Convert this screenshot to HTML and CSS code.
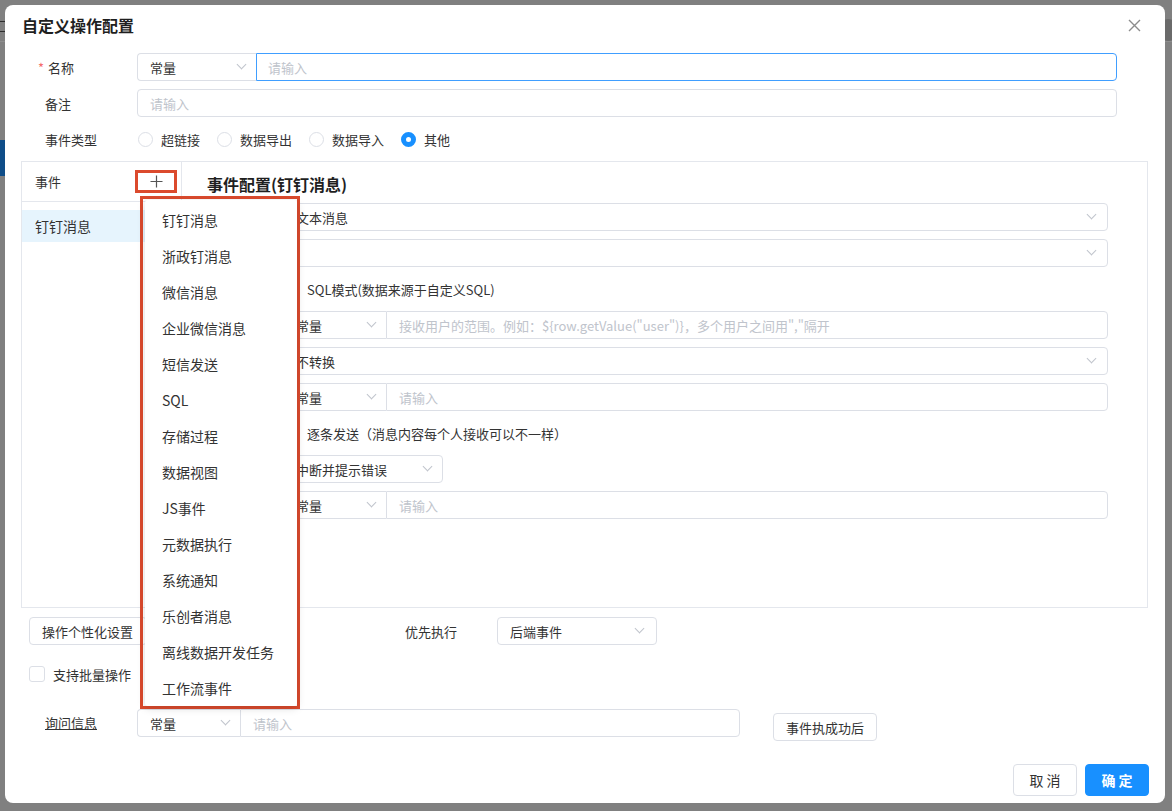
FILE: index.html
```html
<!DOCTYPE html>
<html lang="zh-CN">
<head>
  <meta charset="UTF-8" />
  <title>自定义操作配置</title>
  <link rel="stylesheet" href="styles.css">
</head>
<body>

<div class="page-behind">
  <div class="behind-top"><span class="behind-mark"></span></div>
  <div class="behind-nav"></div>
  <div class="behind-badge"></div>
</div>

<div class="dialog">
  <div class="dialog-head">
    <span class="dialog-title">自定义操作配置</span>
    <span class="dialog-close">
      <svg width="13" height="13" viewBox="0 0 13 13"><path d="M1 1L12 12M12 1L1 12" stroke="#8c8c8c" stroke-width="1.4" fill="none"/></svg>
    </span>
  </div>

  <div class="dialog-body">
    <div class="form-row">
      <label class="form-label"><span class="req">*</span>名称</label>
      <div class="input-group">
        <div class="ig-select wide">常量<i class="chev"></i></div>
        <div class="ig-input focus">请输入</div>
      </div>
    </div>
    <div class="form-row">
      <label class="form-label">备注</label>
      <div class="text-input">请输入</div>
    </div>
    <div class="form-row">
      <label class="form-label">事件类型</label>
      <div class="radio-group">
        <span class="radio"><i class="radio-dot"></i>超链接</span>
        <span class="radio"><i class="radio-dot"></i>数据导出</span>
        <span class="radio"><i class="radio-dot"></i>数据导入</span>
        <span class="radio"><i class="radio-dot checked"></i>其他</span>
      </div>
    </div>

    <div class="event-panel">
      <div class="event-list">
        <div class="event-list-head">
          <span>事件</span>
          <span class="add-btn">
            <svg width="13" height="13" viewBox="0 0 13 13"><path d="M0.5 6.5H12.5M6.5 0.5V12.5" stroke="#555" stroke-width="1.2" fill="none"/></svg>
          </span>
        </div>
        <div class="event-item active"><span class="event-name">钉钉消息</span></div>
      </div>

      <div class="event-config">
        <div class="config-title">事件配置(钉钉消息)</div>

        <div class="cfg-row">
          <span class="cfg-label"></span>
          <div class="select"><span>文本消息</span><i class="chev"></i></div>
        </div>
        <div class="cfg-row">
          <span class="cfg-label"></span>
          <div class="select"><span></span><i class="chev"></i></div>
        </div>
        <div class="cfg-row">
          <span class="cfg-label"></span>
          <span class="check"><i class="check-box"></i>SQL模式(数据来源于自定义SQL)</span>
        </div>
        <div class="cfg-row">
          <span class="cfg-label"></span>
          <div class="input-group">
            <div class="ig-select"><span>常量</span><i class="chev"></i></div>
            <div class="ig-input">接收用户的范围。例如：${row.getValue("user")}，多个用户之间用","隔开</div>
          </div>
        </div>
        <div class="cfg-row">
          <span class="cfg-label"></span>
          <div class="select"><span>不转换</span><i class="chev"></i></div>
        </div>
        <div class="cfg-row">
          <span class="cfg-label"></span>
          <div class="input-group">
            <div class="ig-select"><span>常量</span><i class="chev"></i></div>
            <div class="ig-input">请输入</div>
          </div>
        </div>
        <div class="cfg-row">
          <span class="cfg-label"></span>
          <span class="check"><i class="check-box"></i>逐条发送（消息内容每个人接收可以不一样）</span>
        </div>
        <div class="cfg-row">
          <span class="cfg-label"></span>
          <div class="select short"><span>中断并提示错误</span><i class="chev"></i></div>
        </div>
        <div class="cfg-row">
          <span class="cfg-label"></span>
          <div class="input-group">
            <div class="ig-select"><span>常量</span><i class="chev"></i></div>
            <div class="ig-input">请输入</div>
          </div>
        </div>
      </div>
    </div>

    <div class="extra-row">
      <div class="extra-left">
        <button class="btn setting-btn">操作个性化设置</button>
      </div>
      <label class="form-label">优先执行</label>
      <div class="select priority">后端事件<i class="chev"></i></div>
    </div>

    <div class="batch-row">
      <span class="check"><i class="check-box big"></i>支持批量操作</span>
    </div>

    <div class="ask-row">
      <label class="form-label"><u>询问信息</u></label>
      <div class="input-group ask">
        <div class="ig-select">常量<i class="chev"></i></div>
        <div class="ig-input">请输入</div>
      </div>
      <button class="btn after-btn">事件执成功后</button>
    </div>
  </div>

  <div class="dialog-foot">
    <button class="btn foot-btn">取 消</button>
    <button class="btn foot-btn primary">确 定</button>
  </div>

  <div class="add-menu">
    <ul class="menu">
      <li>钉钉消息</li>
      <li>浙政钉消息</li>
      <li>微信消息</li>
      <li>企业微信消息</li>
      <li>短信发送</li>
      <li>SQL</li>
      <li>存储过程</li>
      <li>数据视图</li>
      <li>JS事件</li>
      <li>元数据执行</li>
      <li>系统通知</li>
      <li>乐创者消息</li>
      <li>离线数据开发任务</li>
      <li>工作流事件</li>
    </ul>
  </div>
</div>

</body>
</html>
```

FILE: styles.css
```css
* {
  box-sizing: border-box;
}

body {
  margin: 0;
  width: 1172px;
  height: 811px;
  overflow: hidden;
  background: #808080;
  font-family: "Noto Sans CJK SC", "Noto Sans", sans-serif;
  font-size: 13px;
  color: #333;
  position: relative;
}

/* page behind the mask */
.behind-top {
  height: 42px;
  border-bottom: 1px solid #8e8e8e;
  position: relative;
}

.behind-mark {
  position: absolute;
  left: 0;
  top: 21px;
  width: 5px;
  height: 11px;
  border-top: 1px solid #2e2e2e;
  border-bottom: 1px solid #2e2e2e;
}

.behind-nav {
  position: absolute;
  left: 0;
  top: 140px;
  width: 6px;
  height: 36px;
  background: #0f4d88;
}

.behind-badge {
  position: absolute;
  right: -6px;
  top: 19px;
  width: 20px;
  height: 22px;
  border-radius: 11px;
  background: #6a6a6a;
}

/* dialog */
.dialog {
  position: absolute;
  left: 5px;
  top: 5px;
  width: 1160px;
  height: 798px;
  background: #fff;
  border-radius: 8px;
  display: flex;
  flex-direction: column;
}

.dialog-head {
  height: 40px;
  display: flex;
  align-items: center;
  justify-content: space-between;
  padding: 0 24px 0 17px;
}

.dialog-title {
  font-size: 16px;
  font-weight: bold;
  color: #1f1f1f;
  margin-top: -1px;
}

.dialog-close {
  display: flex;
  width: 13px;
  height: 13px;
  margin-top: 1px;
}

.dialog-body {
  flex: 1;
  padding: 8px 17px 0 16px;
}

.form-row {
  display: flex;
  align-items: center;
  height: 28px;
  margin-bottom: 8px;
  padding: 0 31px 0 24px;
}

.form-label {
  width: 92px;
  flex-shrink: 0;
  font-size: 13px;
  color: #333;
}

.req {
  color: #f56c6c;
  margin-left: -7px;
  margin-right: 4px;
}

.chev {
  display: block;
  width: 10px;
  height: 6px;
  position: relative;
  flex-shrink: 0;
}

.chev::before {
  content: "";
  position: absolute;
  left: 2px;
  top: -3px;
  width: 6px;
  height: 6px;
  border-right: 1px solid #c0c4cc;
  border-bottom: 1px solid #c0c4cc;
  transform: rotate(45deg);
}

.input-group {
  flex: 1;
  height: 28px;
  display: flex;
}

.ig-select {
  width: 103px;
  height: 28px;
  border: 1px solid #dcdfe6;
  border-right: none;
  border-radius: 4px 0 0 4px;
  display: flex;
  align-items: center;
  justify-content: space-between;
  padding: 0 10px 0 12px;
  color: #333;
}

.ig-select.wide {
  width: 119px;
}

.ig-input {
  flex: 1;
  height: 28px;
  border: 1px solid #dcdfe6;
  border-radius: 0 4px 4px 0;
  display: flex;
  align-items: center;
  padding-left: 12px;
  color: #c0c4cc;
  white-space: nowrap;
  overflow: hidden;
}

.ig-input.focus {
  border-color: #409eff;
  padding-left: 11px;
}

.text-input {
  flex: 1;
  height: 28px;
  border: 1px solid #dcdfe6;
  border-radius: 4px;
  display: flex;
  align-items: center;
  padding-left: 12px;
  color: #c0c4cc;
}

.radio-group {
  display: flex;
  align-items: center;
}

.radio {
  display: flex;
  align-items: center;
  margin-right: 16px;
  color: #333;
}

.radio-dot {
  width: 15px;
  height: 15px;
  border: 1px solid #dcdfe6;
  border-radius: 50%;
  margin: 0 8px 0 1px;
}

.radio-dot.checked {
  border: 5px solid #1890ff;
}

/* events panel */
.event-panel {
  height: 447px;
  border: 1px solid #e4e7ed;
  display: flex;
}

.event-list {
  width: 160px;
  border-right: 1px solid #e4e7ed;
}

.event-list-head {
  height: 40px;
  border-bottom: 1px solid #e4e7ed;
  display: flex;
  align-items: center;
  justify-content: space-between;
  padding: 0 4px 0 13px;
  margin-bottom: 8px;
}

.add-btn {
  width: 42px;
  height: 23px;
  border: 3px solid #db4a2d;
  display: flex;
  align-items: center;
  justify-content: center;
  margin-top: -1px;
}

.event-item {
  height: 32px;
  line-height: 32px;
  padding-left: 13px;
  font-size: 14px;
}

.event-item.active {
  background: #e6f4fd;
}

/* only the part left of the dropdown can be seen */
.event-name {
  display: inline-block;
  width: 104px;
  overflow: hidden;
  white-space: nowrap;
  vertical-align: top;
}

.event-config {
  flex: 1;
  padding: 10px 39px 0 25px;
}

.config-title {
  font-size: 16px;
  font-weight: bold;
  line-height: 24px;
  margin-bottom: 7px;
  color: #1f1f1f;
}

.cfg-row {
  display: flex;
  align-items: center;
  height: 28px;
  margin-bottom: 8px;
}

.cfg-label {
  width: 76px;
  flex-shrink: 0;
}

.select {
  flex: 1;
  height: 28px;
  border: 1px solid #dcdfe6;
  border-radius: 4px;
  display: flex;
  align-items: center;
  justify-content: space-between;
  padding: 0 11px 0 12px;
  color: #333;
}

.select.short {
  flex: none;
  width: 160px;
  padding-right: 10px;
}

.check {
  display: flex;
  align-items: center;
  color: #333;
}

.check-box {
  width: 15px;
  height: 15px;
  border: 1px solid #dcdfe6;
  border-radius: 3px;
  margin-right: 9px;
}

.check-box.big {
  width: 16px;
  height: 16px;
  margin-right: 8px;
}

/* rows under the panel */
.extra-row {
  display: flex;
  align-items: center;
  height: 28px;
  margin-top: 9px;
  padding-left: 8px;
}

.extra-left {
  width: 376px;
}

.btn {
  font-family: inherit;
  font-size: 13px;
  height: 28px;
  padding: 0 12px;
  border: 1px solid #dcdfe6;
  border-radius: 4px;
  background: #fff;
  color: #333;
  cursor: pointer;
}

.setting-btn {
  width: 118px;
  white-space: nowrap;
  text-align: left;
}

.select.priority {
  flex: none;
  width: 160px;
  padding-right: 12px;
}

.batch-row {
  display: flex;
  height: 16px;
  margin-top: 21px;
  padding-left: 8px;
}

.ask-row {
  display: flex;
  align-items: flex-start;
  height: 28px;
  margin-top: 27px;
  padding-left: 24px;
}

.ask-row .form-label {
  line-height: 28px;
}

.input-group.ask {
  flex: none;
  width: 603px;
}

.after-btn {
  margin: 4px 0 0 33px;
  width: 104px;
}

.dialog-foot {
  display: flex;
  justify-content: flex-end;
  gap: 8px;
  padding: 0 16px 7px;
}

.foot-btn {
  width: 64px;
  height: 32px;
  font-size: 14px;
  padding: 0;
}

.foot-btn.primary {
  background: #1890ff;
  border-color: #1890ff;
  color: #fff;
  font-weight: bold;
}

/* add-event dropdown */
.add-menu {
  position: absolute;
  left: 135px;
  top: 191px;
  width: 160px;
  height: 513px;
  border: 3px solid #db4a2d;
  padding: 1px 0 0 2px;
}

.menu {
  list-style: none;
  margin: 0;
  padding: 2px 0 0;
  height: 100%;
  background: #fff;
  box-shadow: 0 2px 8px rgba(0, 0, 0, 0.15);
  border-radius: 3px;
}

.menu li {
  height: 36px;
  line-height: 36px;
  padding-left: 17px;
  font-size: 14px;
  color: #333;
}
```
